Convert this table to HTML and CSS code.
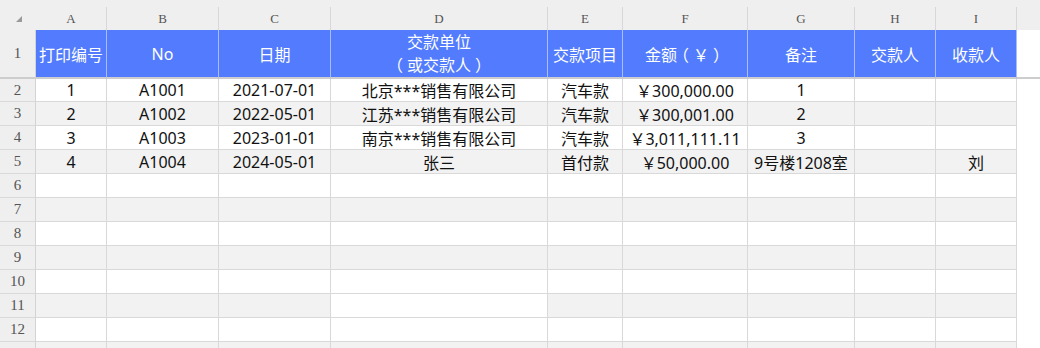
FILE: index.html
```html
<!DOCTYPE html>
<html lang="zh-CN">
<head>
<meta charset="utf-8">
<title>Sheet</title>
<link rel="stylesheet" href="styles.css">
</head>
<body>
<div class="sheet">
  <div class="row colhead">
    <div class="corner"><svg width="36" height="30" viewBox="0 0 36 30"><polygon points="22,16 22,22 16,22" fill="#9a9a9a"/></svg></div>
    <div class="ch">A</div><div class="ch">B</div><div class="ch">C</div><div class="ch">D</div><div class="ch">E</div><div class="ch">F</div><div class="ch">G</div><div class="ch">H</div><div class="ch">I</div>
    <div class="ch fill"></div>
  </div>
  <div class="row r1">
    <div class="rh">1</div>
    <div class="hc">打印编号</div>
    <div class="hc">No</div>
    <div class="hc">日期</div>
    <div class="hc two"><span>交款单位</span><span><span class="br">（</span>或交款人<span class="br">）</span></span></div>
    <div class="hc">交款项目</div>
    <div class="hc"><span>金额<span class="br">（</span>￥<span class="br">）</span></span></div>
    <div class="hc">备注</div>
    <div class="hc">交款人</div>
    <div class="hc">收款人</div>
    <div class="fill"></div>
  </div>
  <div class="row r2">
    <div class="rh">2</div>
    <div class="c">1</div><div class="c">A1001</div><div class="c">2021-07-01</div><div class="c">北京***销售有限公司</div><div class="c">汽车款</div><div class="c">￥300,000.00</div><div class="c">1</div><div class="c"></div><div class="c"></div>
    <div class="fill"></div>
  </div>
  <div class="row rn odd">
    <div class="rh">3</div>
    <div class="c">2</div><div class="c">A1002</div><div class="c">2022-05-01</div><div class="c">江苏***销售有限公司</div><div class="c">汽车款</div><div class="c">￥300,001.00</div><div class="c">2</div><div class="c"></div><div class="c"></div>
    <div class="fill"></div>
  </div>
  <div class="row rn">
    <div class="rh">4</div>
    <div class="c">3</div><div class="c">A1003</div><div class="c">2023-01-01</div><div class="c">南京***销售有限公司</div><div class="c">汽车款</div><div class="c">￥3,011,111.11</div><div class="c">3</div><div class="c"></div><div class="c"></div>
    <div class="fill"></div>
  </div>
  <div class="row rn odd">
    <div class="rh">5</div>
    <div class="c">4</div><div class="c">A1004</div><div class="c">2024-05-01</div><div class="c">张三</div><div class="c">首付款</div><div class="c">￥50,000.00</div><div class="c">9号楼1208室</div><div class="c"></div><div class="c">刘</div>
    <div class="fill"></div>
  </div>
  <div class="row rn">
    <div class="rh">6</div>
    <div class="c"></div><div class="c"></div><div class="c"></div><div class="c"></div><div class="c"></div><div class="c"></div><div class="c"></div><div class="c"></div><div class="c"></div>
    <div class="fill"></div>
  </div>
  <div class="row rn odd">
    <div class="rh">7</div>
    <div class="c"></div><div class="c"></div><div class="c"></div><div class="c"></div><div class="c"></div><div class="c"></div><div class="c"></div><div class="c"></div><div class="c"></div>
    <div class="fill"></div>
  </div>
  <div class="row rn">
    <div class="rh">8</div>
    <div class="c"></div><div class="c"></div><div class="c"></div><div class="c"></div><div class="c"></div><div class="c"></div><div class="c"></div><div class="c"></div><div class="c"></div>
    <div class="fill"></div>
  </div>
  <div class="row rn odd">
    <div class="rh">9</div>
    <div class="c"></div><div class="c"></div><div class="c"></div><div class="c"></div><div class="c"></div><div class="c"></div><div class="c"></div><div class="c"></div><div class="c"></div>
    <div class="fill"></div>
  </div>
  <div class="row rn">
    <div class="rh">10</div>
    <div class="c"></div><div class="c"></div><div class="c"></div><div class="c"></div><div class="c"></div><div class="c"></div><div class="c"></div><div class="c"></div><div class="c"></div>
    <div class="fill"></div>
  </div>
  <div class="row rn odd">
    <div class="rh">11</div>
    <div class="c"></div><div class="c"></div><div class="c"></div><div class="c plain"></div><div class="c"></div><div class="c"></div><div class="c"></div><div class="c"></div><div class="c"></div>
    <div class="fill"></div>
  </div>
  <div class="row rn">
    <div class="rh">12</div>
    <div class="c"></div><div class="c"></div><div class="c"></div><div class="c"></div><div class="c"></div><div class="c"></div><div class="c"></div><div class="c"></div><div class="c"></div>
    <div class="fill"></div>
  </div>
  <div class="row rn odd">
    <div class="rh"></div>
    <div class="c"></div><div class="c"></div><div class="c"></div><div class="c"></div><div class="c"></div><div class="c"></div><div class="c"></div><div class="c"></div><div class="c"></div>
    <div class="fill"></div>
  </div>
</div>
</body>
</html>
```

FILE: styles.css
```css
html, body {
  margin: 0;
  padding: 0;
  background: #ffffff;
}
body {
  width: 1040px;
  height: 348px;
  overflow: hidden;
  font-family: "Noto Sans", "Noto Sans CJK SC", sans-serif;
  font-size: 16px;
  color: #111111;
  text-spacing-trim: space-all;
}
.sheet {
  display: flex;
  flex-direction: column;
}
.row {
  display: grid;
  grid-template-columns: 36px 71px 112px 112px 217px 75px 125px 107px 81px 81px 1fr;
}
.row > div {
  box-sizing: border-box;
  display: flex;
  align-items: center;
  justify-content: center;
  white-space: nowrap;
  overflow: hidden;
}

/* column header */
.colhead {
  height: 30px;
  background: #efefef;
}
.corner svg {
  display: block;
}
.row > .corner {
  align-self: stretch;
}
.row > .ch {
  align-self: end;
  height: 23px;
  border-right: 1px solid #d8d8d8;
  font-family: "Liberation Serif", serif;
  font-size: 13px;
  color: #555555;
  padding-top: 1px;
}
.row > .ch.fill {
  border-right: none;
}

/* row headers */
.row > .rh {
  background: #efefef;
  border-right: 1px solid #d4d4d4;
  border-bottom: 1px solid #d9d9d9;
  font-family: "Liberation Serif", serif;
  font-size: 15px;
  color: #555555;
}

/* title row */
.r1 {
  height: 49px;
}
.r1 > .rh,
.r1 > .fill {
  border-bottom: 2px solid #cdcdcd;
}
.row > .hc {
  background: #527cfd;
  color: #ffffff;
  border-right: 1px solid #a9bdfd;
  border-bottom: 2px solid #cdcdcd;
  font-size: 16px;
}
.row > .hc.two {
  flex-direction: column;
  line-height: 23px;
}
/* centre full-width brackets in their em box, as the source font does */
.br {
  font-feature-settings: "halt" 1;
  padding: 0 0.25em;
}

/* data rows */
.r2 {
  height: 23px;
}
.rn {
  height: 24px;
}
.row > .c {
  background: #ffffff;
  border-right: 1px solid #d9d9d9;
  border-bottom: 1px solid #d9d9d9;
  color: #111111;
}
.odd > .c {
  background: #f2f2f2;
}
.odd > .c.plain {
  background: #ffffff;
}
.row > .fill {
  background: #ffffff;
}
.colhead > .ch.fill {
  background: #efefef;
}
```
